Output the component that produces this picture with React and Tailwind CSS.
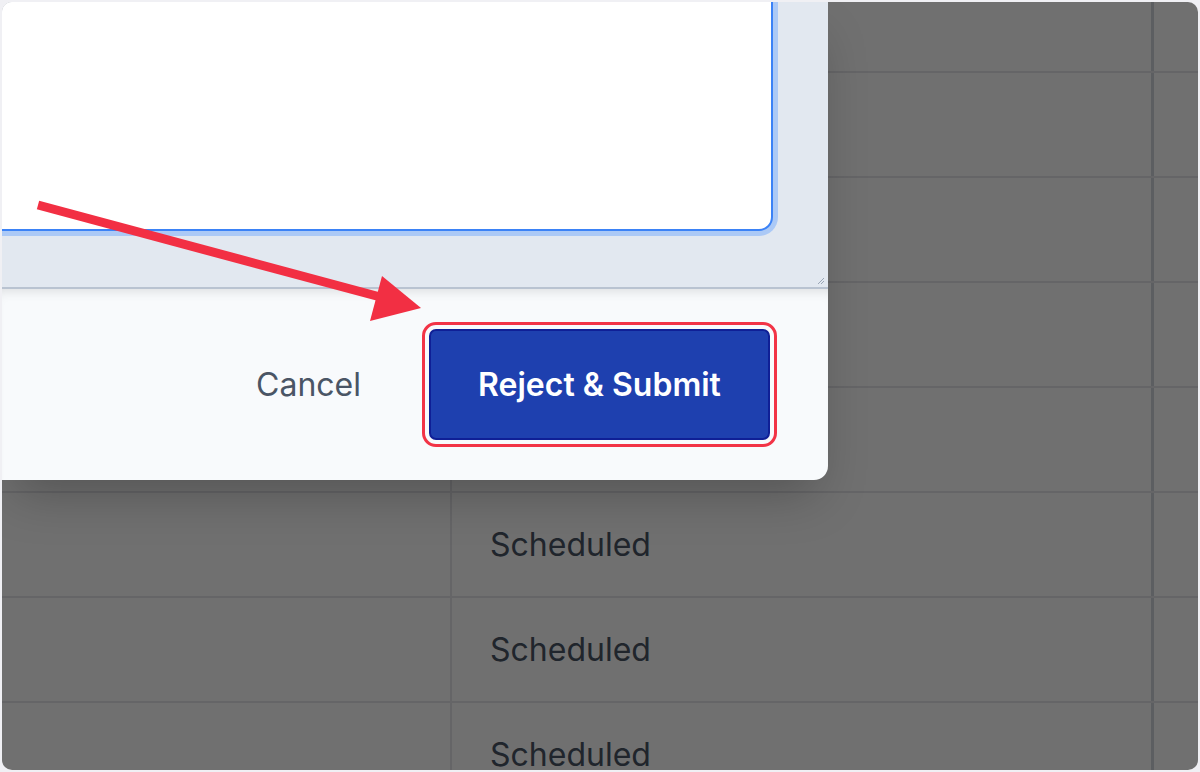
import React from "react";

const rows = [
  { h: "h-[71px]", label: "" },
  { h: "h-[105px]", label: "" },
  { h: "h-[105px]", label: "" },
  { h: "h-[105px]", label: "" },
  { h: "h-[105px]", label: "" },
  { h: "h-[105px]", label: "Scheduled" },
  { h: "h-[105px]", label: "Scheduled" },
  { h: "h-[105px]", label: "Scheduled" },
];

export default function App() {
  return (
    <div
      className="relative w-[1200px] h-[772px] bg-[#f0f0f4] p-[2px] overflow-hidden"
      style={{ fontFamily: "Inter, 'Noto Sans', sans-serif" }}
    >
      <div className="relative w-full h-full rounded-[10px] overflow-hidden bg-white">
        {/* background table */}
        <div className="flex flex-col">
          {rows.map((r, i) => (
            <div key={i} className={`flex ${r.h} shrink-0 border-b-2 border-gray-200`}>
              <div className="w-[450px] shrink-0 border-r-2 border-gray-200" />
              <div className="flex-1 flex items-center pl-[38px] text-[32px] text-gray-600">
                {r.label}
              </div>
              <div className="w-[47px] shrink-0 border-l-[3px] border-gray-300" />
            </div>
          ))}
        </div>

        {/* dim overlay */}
        <div className="absolute inset-0 bg-black/[0.56]" />

        {/* modal */}
        <div className="absolute left-0 top-0 w-[826px] h-[478px] flex flex-col rounded-br-[14px] overflow-hidden shadow-2xl bg-[#f8fafc]">
          <div className="relative h-[287px] shrink-0 bg-[#e2e8f0] border-b-2 border-[#b9c3d1] flex justify-start items-end pr-[55px] pb-[56px] overflow-hidden">
            <div className="-ml-[40px] h-[260px] flex-1 bg-white border-2 border-[#3b82f6] rounded-br-[14px] ring-[5px] ring-[#abc9f6]" />
            <svg className="absolute right-[3px] bottom-[2px]" width="9" height="9" viewBox="0 0 9 9">
              <path d="M8 2 L2 8 M8 5 L5 8" stroke="#9aa6b6" strokeWidth="1" />
            </svg>
          </div>
          <div className="flex-1 flex items-center justify-end pr-[58px] gap-[68px] shadow-[inset_0_10px_12px_-8px_rgba(0,0,0,0.12)]">
            <span className="text-[32px] text-gray-600">Cancel</span>
            <button className="w-[341px] h-[111px] rounded-[7px] bg-[#1e40af] border-2 border-[#0f1f96] text-white text-[32px] font-semibold outline-[3px] outline-solid outline-[#f23346] outline-offset-[4px]">
              Reject &amp; Submit
            </button>
          </div>
        </div>
      </div>

      {/* annotation arrow */}
      <svg className="absolute inset-0 pointer-events-none" width="1200" height="772" viewBox="0 0 1200 772">
        <line x1="38" y1="205" x2="384" y2="298" stroke="#f22f43" strokeWidth="9" />
        <polygon points="382,276 421,308 370,321" fill="#f22f43" />
      </svg>
    </div>
  );
}
